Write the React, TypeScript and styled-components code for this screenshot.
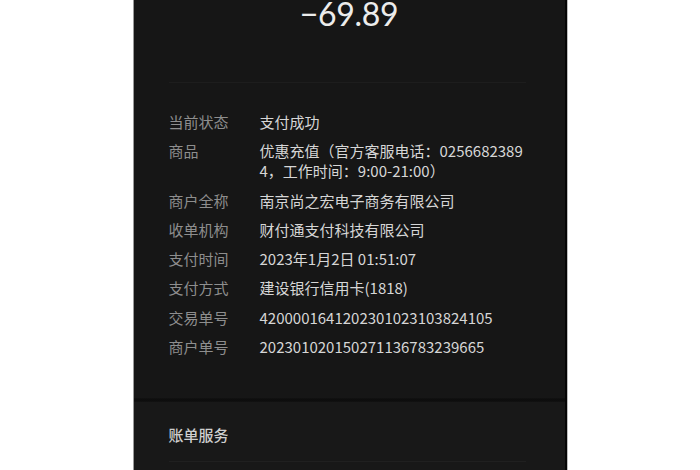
import { FC } from 'react'
import styled, { createGlobalStyle } from 'styled-components'

type DetailRow = {
	label: string
	value: string
}

const rows: DetailRow[] = [
	{ label: '当前状态', value: '支付成功' },
	{ label: '商品', value: '优惠充值（官方客服电话：02566823894，工作时间：9:00-21:00）' },
	{ label: '商户全称', value: '南京尚之宏电子商务有限公司' },
	{ label: '收单机构', value: '财付通支付科技有限公司' },
	{ label: '支付时间', value: '2023年1月2日 01:51:07' },
	{ label: '支付方式', value: '建设银行信用卡(1818)' },
	{ label: '交易单号', value: '4200001641202301023103824105' },
	{ label: '商户单号', value: '202301020150271136783239665' }
]

const App: FC = () => {
	return (
		<>
			<GlobalStyle />
			<Phone>
				<Summary>
					<Amount>−69.89</Amount>
				</Summary>
				<Details>
					{rows.map((row) => (
						<Row key={row.label}>
							<Label>{row.label}</Label>
							<Value>{row.value}</Value>
						</Row>
					))}
				</Details>
				<Gap />
				<Services>
					<ServicesTitle>账单服务</ServicesTitle>
				</Services>
			</Phone>
		</>
	)
}

const GlobalStyle = createGlobalStyle`
	html, body {
		margin: 0;
		background: #ffffff;
	}
	body {
		font-family: 'Noto Sans CJK SC', 'Noto Sans', sans-serif;
	}
`

const Phone = styled.div`
	background: #161616;
	border-right: 2px solid #050505;
	box-shadow: 1px 0 0 #bdbdbd, -1px 0 0 #9a9a9a;
	box-sizing: border-box;
	display: flex;
	flex-direction: column;
	height: 470px;
	margin: 0 auto;
	overflow: hidden;
	width: 433px;
`

const Summary = styled.div`
	border-bottom: 1px solid #1d1d1d;
	box-sizing: border-box;
	display: flex;
	height: 83px;
	justify-content: center;
	margin: 0 39px 0 35px;
`

const Amount = styled.div`
	color: #ececec;
	font-family: Lato, 'Open Sans', sans-serif;
	font-size: 32px;
	letter-spacing: -0.3px;
	line-height: 32px;
	margin-top: -2px;
	padding-left: 4px;
`

const Details = styled.div`
	display: flex;
	flex-direction: column;
	gap: 9.3px;
	padding: 29px 39px 41px 35px;
`

const Row = styled.div`
	display: grid;
	font-size: 15px;
	grid-template-columns: 91px 1fr;
	line-height: 20px;
`

const Label = styled.div`
	color: #8e8e8e;
`

const Value = styled.div`
	color: #d6d6d6;
	word-break: break-all;
`

const Gap = styled.div`
	background: linear-gradient(#121212, #0c0c0c 50%, #121212);
	height: 4px;
`

const Services = styled.div`
	background: #181818;
	flex: 1;
	padding: 23px 39px 0 35px;
`

const ServicesTitle = styled.div`
	border-bottom: 1px solid #202020;
	color: #cfcfcf;
	font-size: 15px;
	font-weight: 500;
	line-height: 20px;
	padding-bottom: 16px;
`

export default App
